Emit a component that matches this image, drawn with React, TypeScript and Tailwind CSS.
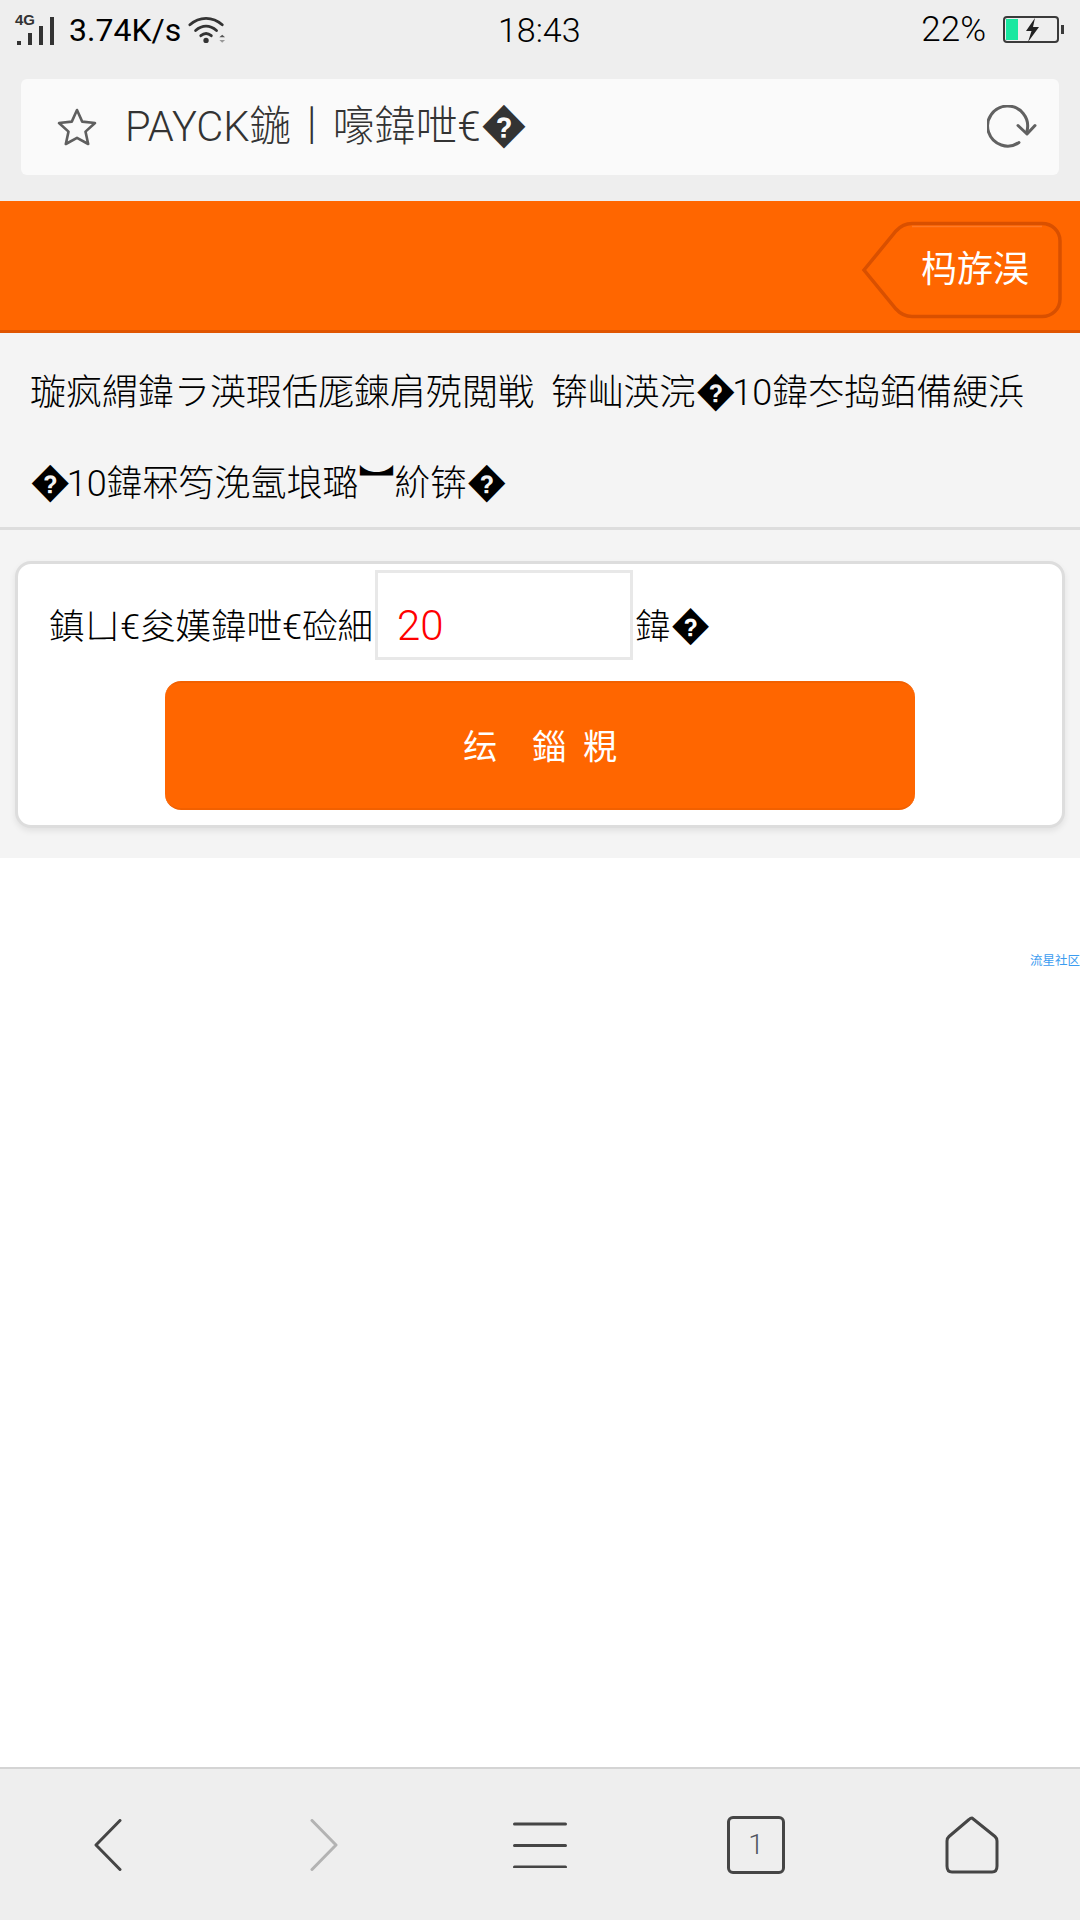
const font = '[font-family:Roboto,"Noto_Sans_CJK_SC","DejaVu_Sans",sans-serif]';

function Q() {
  return <span className="text-[1.1em] leading-none tracking-[-0.1em]">�</span>;
}

function Wifi() {
  return (
    <svg width="38" height="30" viewBox="0 0 40 30" fill="none" className="block">
      <path d="M2 9.5C12 0.5 26 0.5 36 9.5" stroke="#333" strokeWidth="3" strokeLinecap="round" />
      <path d="M8 15.5C15 9.5 23 9.5 30 15.5" stroke="#333" strokeWidth="3" strokeLinecap="round" />
      <path d="M13.5 21C17 18 21 18 24.5 21" stroke="#333" strokeWidth="3" strokeLinecap="round" />
      <circle cx="19" cy="26" r="2.8" fill="#333" />
      <path d="M33 22.5L36 20L39 22.5Z" fill="#555" />
      <path d="M33 25.5H39L36 28.5Z" fill="#999" />
    </svg>
  );
}

function Signal() {
  return (
    <div className="relative w-[40px] h-[30px]">
      <span className="absolute left-0 top-[-2px] text-[15px] leading-[14px] font-bold text-[#333] [font-family:'Liberation_Sans',sans-serif]">4G</span>
      <div className="absolute left-[2px] bottom-0 w-[4px] h-[4px] bg-[#333]" />
      <div className="absolute left-[13px] bottom-0 w-[4px] h-[12px] bg-[#333]" />
      <div className="absolute left-[24px] bottom-0 w-[4px] h-[19px] bg-[#333]" />
      <div className="absolute left-[35px] bottom-0 w-[4px] h-[28px] bg-[#333]" />
    </div>
  );
}

function Battery() {
  return (
    <svg width="62" height="28" viewBox="0 0 62 28" fill="none" className="block">
      <rect x="1" y="1" width="54" height="25" rx="3" stroke="#3a3a3a" strokeWidth="2" fill="none" />
      <rect x="3" y="3" width="12" height="21" fill="#18e8a0" />
      <rect x="58" y="9" width="3" height="9" fill="#3a3a3a" />
      <path d="M32 2L23 15H28.5L25 26L36 11H30L32 2Z" fill="#222" />
    </svg>
  );
}

function Star() {
  return (
    <svg width="42" height="40" viewBox="0 0 42 40" fill="none" className="block shrink-0">
      <path d="M21 3L26.2 14.6L39 16L29.5 24.6L32.2 37L21 30.8L9.8 37L12.5 24.6L3 16L15.8 14.6Z" stroke="#5f5f5f" strokeWidth="2.6" strokeLinejoin="round" />
    </svg>
  );
}

function Refresh() {
  return (
    <svg width="50" height="44" viewBox="0 0 50 44" fill="none" className="block">
      <path d="M40 26A20 20 0 1 0 32 37.5" stroke="#616161" strokeWidth="3" strokeLinecap="round" />
      <path d="M31 20.5L40 29L48 20.5" stroke="#616161" strokeWidth="3" strokeLinecap="round" strokeLinejoin="round" />
    </svg>
  );
}

function BackShape() {
  return (
    <svg width="204" height="98" viewBox="0 0 204 98" fill="none" className="absolute left-0 top-0">
      <path d="M4 49L36 10C41 4.5 45 2.5 52 2.5H182C192 2.5 200 10 200 20V78C200 88 192 95.5 182 95.5H52C45 95.5 41 93.5 36 88Z" fill="#ff6600" stroke="#d95000" strokeWidth="3.5" />
      <path d="M52 5.5H182" stroke="#ff7a26" strokeWidth="1.5" />
    </svg>
  );
}

const nav = "flex-1 flex items-center justify-center";

export default function App() {
  return (
    <div className={`w-[1080px] h-[1920px] flex flex-col bg-white overflow-hidden font-light ${font}`}>
      <div className="h-[201px] bg-[#eeeeee] flex flex-col">
        <div className="h-[79px] relative flex items-start justify-between pl-[15px] pr-[15px] pt-[12px] text-[#000] text-[32px] leading-[36px]">
          <div className="flex items-center">
            <Signal />
            <span className="ml-[14px] font-normal">3.74K/s</span>
            <span className="ml-[7px]"><Wifi /></span>
          </div>
          <span className="absolute left-[498px] top-[12px] text-[34px]">18:43</span>
          <div className="flex items-center">
            <span className="text-[35px]">22%</span>
            <span className="ml-[17px]"><Battery /></span>
          </div>
        </div>
        <div className="h-[96px] mx-[21px] bg-[#fafafa] rounded-[6px] flex items-center pl-[35px] pr-[22px] text-[#333333] text-[41.6px]">
          <Star />
          <span className="ml-[27px] flex-1 whitespace-pre">PAYCK鍦丨嚎鍏呭€<Q /></span>
          <Refresh />
        </div>
      </div>

      <div className="h-[132px] bg-[#ff6600] border-b-[3px] border-[#e05500] flex justify-end pr-[16px] pt-[20px]">
        <div className="relative w-[204px] h-[98px] flex items-center justify-end pr-[35px] text-white text-[36px] font-normal">
          <BackShape />
          <span className="relative">杩斿洖</span>
        </div>
      </div>

      <div className="h-[197px] bg-[#f4f4f4] border-b-[3px] border-[#dddddd] pt-[15px] pl-[30px] text-[36px] leading-[91px] text-[#000] whitespace-pre">
        <div>璇疯緭鍏ラ渶瑕佸厖鍊肩殑閲戦{"\u00a0\u00a0"}锛屾渶浣<Q />10鍏冭捣銆備綆浜</div>
        <div><Q />10鍏冧笉浼氬埌璐︼紒锛<Q /></div>
      </div>

      <div className="h-[328px] bg-[#f4f4f4] px-[15px] pt-[31px]">
        <div className="h-[267px] bg-white border-[3px] border-[#dddddd] rounded-[16px] shadow-[0_3px_6px_rgba(0,0,0,0.08)] flex flex-col items-center pt-[6px]">
          <div className="w-full flex items-center h-[90px] pl-[31px] text-[35.6px] text-[#000]">
            <span className="whitespace-pre w-[324px] pt-[25px]">鎮ㄩ€夋嫨鍏呭€硷細</span>
            <input
              readOnly
              value="20"
              className="ml-[2px] w-[258px] h-[90px] border-[3px] border-[#e8e8e8] bg-white pl-[19px] pt-[21px] text-[42px] text-[#ff0000] outline-none"
            />
            <span className="ml-[2px] pt-[25px]">鍏<Q /></span>
          </div>
          <div className="mt-[21px] w-[750px] h-[129px] rounded-[16px] bg-[#ff6600] border-y-2 border-[#f26000] flex items-center justify-center pt-[4px] text-white text-[34px] font-normal">
            <span>纭</span>
            <span className="ml-[35px]">錙</span>
            <span className="ml-[17px]">粯</span>
          </div>
        </div>
      </div>

      <div className="flex-1 bg-white pt-[96px] flex justify-end">
        <span className="text-[12.5px] leading-[14px] font-normal text-[#3b9cf0]">流星社区</span>
      </div>

      <div className="h-[153px] bg-[#eeeeee] border-t-2 border-[#d4d4d4] flex items-center">
        <div className={nav}>
          <svg width="28" height="52" viewBox="0 0 28 52" fill="none">
            <path d="M26 1.5L2 26L26 50.5" stroke="#454545" strokeWidth="3" strokeLinecap="round" strokeLinejoin="round" />
          </svg>
        </div>
        <div className={nav}>
          <svg width="28" height="52" viewBox="0 0 28 52" fill="none">
            <path d="M2 1.5L26 26L2 50.5" stroke="#b3b3b3" strokeWidth="3" strokeLinecap="round" strokeLinejoin="round" />
          </svg>
        </div>
        <div className={nav}>
          <svg width="54" height="46" viewBox="0 0 54 46" fill="none">
            <path d="M1.5 2H52.5M1.5 23.5H52.5M1.5 45H52.5" stroke="#454545" strokeWidth="3" strokeLinecap="round" />
          </svg>
        </div>
        <div className={nav}>
          <div className="w-[58px] h-[58px] border-[3px] border-[#454545] rounded-[6px] flex items-center justify-center text-[28px] leading-none text-[#4f5560]">1</div>
        </div>
        <div className={nav}>
          <svg width="54" height="58" viewBox="0 0 54 58" fill="none">
            <path d="M27 2L50 20.5C51.5 21.8 52 23 52 25V50C52 54 50 56 47 56H7C4 56 2 54 2 50V25C2 23 2.5 21.8 4 20.5L24 3.5C25 2.5 26 2 27 2Z" stroke="#454545" strokeWidth="3" strokeLinejoin="round" />
          </svg>
        </div>
      </div>
    </div>
  );
}
